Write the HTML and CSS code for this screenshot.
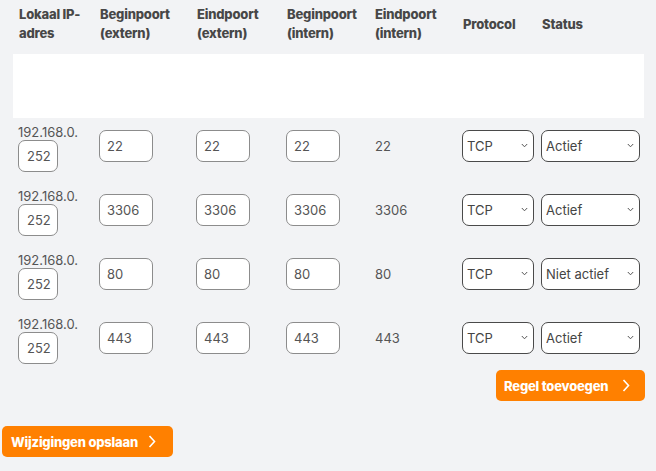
FILE: index.html
```html
<!DOCTYPE html>
<html lang="nl">
<head>
  <meta charset="UTF-8" />
  <title>Port forwarding</title>
  <link rel="stylesheet" href="styles.css">
</head>
<body>

  <div class="regels">
    <table class="tabel">
      <colgroup>
        <col style="width: 81px">
        <col style="width: 97px">
        <col style="width: 90px">
        <col style="width: 88px">
        <col style="width: 88px">
        <col style="width: 79px">
        <col style="width: 108px">
      </colgroup>
      <thead>
        <tr>
          <th>Lokaal IP-adres</th>
          <th>Beginpoort (extern)</th>
          <th>Eindpoort (extern)</th>
          <th>Beginpoort (intern)</th>
          <th>Eindpoort (intern)</th>
          <th>Protocol</th>
          <th>Status</th>
        </tr>
      </thead>
      <tbody>
        <tr class="leeg"><td colspan="7"></td></tr>

        <tr>
          <td class="ip">192.168.0.<br><input class="kort" type="text" value="252"></td>
          <td><input type="text" value="22"></td>
          <td><input type="text" value="22"></td>
          <td><input type="text" value="22"></td>
          <td class="waarde">22</td>
          <td><span class="keuze"><select class="protocol"><option>TCP</option><option>UDP</option></select><svg class="pijl" width="7" height="5" viewBox="0 0 7 5"><polyline points="0.8,1 3.5,3.8 6.2,1" fill="none" stroke="#555" stroke-width="1"/></svg></span></td>
          <td><span class="keuze"><select class="status"><option>Actief</option><option>Niet actief</option></select><svg class="pijl" width="7" height="5" viewBox="0 0 7 5"><polyline points="0.8,1 3.5,3.8 6.2,1" fill="none" stroke="#555" stroke-width="1"/></svg></span></td>
        </tr>

        <tr>
          <td class="ip">192.168.0.<br><input class="kort" type="text" value="252"></td>
          <td><input type="text" value="3306"></td>
          <td><input type="text" value="3306"></td>
          <td><input type="text" value="3306"></td>
          <td class="waarde">3306</td>
          <td><span class="keuze"><select class="protocol"><option>TCP</option><option>UDP</option></select><svg class="pijl" width="7" height="5" viewBox="0 0 7 5"><polyline points="0.8,1 3.5,3.8 6.2,1" fill="none" stroke="#555" stroke-width="1"/></svg></span></td>
          <td><span class="keuze"><select class="status"><option>Actief</option><option>Niet actief</option></select><svg class="pijl" width="7" height="5" viewBox="0 0 7 5"><polyline points="0.8,1 3.5,3.8 6.2,1" fill="none" stroke="#555" stroke-width="1"/></svg></span></td>
        </tr>

        <tr>
          <td class="ip">192.168.0.<br><input class="kort" type="text" value="252"></td>
          <td><input type="text" value="80"></td>
          <td><input type="text" value="80"></td>
          <td><input type="text" value="80"></td>
          <td class="waarde">80</td>
          <td><span class="keuze"><select class="protocol"><option>TCP</option><option>UDP</option></select><svg class="pijl" width="7" height="5" viewBox="0 0 7 5"><polyline points="0.8,1 3.5,3.8 6.2,1" fill="none" stroke="#555" stroke-width="1"/></svg></span></td>
          <td><span class="keuze"><select class="status"><option>Niet actief</option><option>Actief</option></select><svg class="pijl" width="7" height="5" viewBox="0 0 7 5"><polyline points="0.8,1 3.5,3.8 6.2,1" fill="none" stroke="#555" stroke-width="1"/></svg></span></td>
        </tr>

        <tr>
          <td class="ip">192.168.0.<br><input class="kort" type="text" value="252"></td>
          <td><input type="text" value="443"></td>
          <td><input type="text" value="443"></td>
          <td><input type="text" value="443"></td>
          <td class="waarde">443</td>
          <td><span class="keuze"><select class="protocol"><option>TCP</option><option>UDP</option></select><svg class="pijl" width="7" height="5" viewBox="0 0 7 5"><polyline points="0.8,1 3.5,3.8 6.2,1" fill="none" stroke="#555" stroke-width="1"/></svg></span></td>
          <td><span class="keuze"><select class="status"><option>Actief</option><option>Niet actief</option></select><svg class="pijl" width="7" height="5" viewBox="0 0 7 5"><polyline points="0.8,1 3.5,3.8 6.2,1" fill="none" stroke="#555" stroke-width="1"/></svg></span></td>
        </tr>
      </tbody>
    </table>

    <div class="acties">
      <button class="knop knop-regel" type="button">
        Regel toevoegen
        <svg width="8" height="13" viewBox="0 0 8 13"><polyline points="1.5,1 6.5,6.5 1.5,12" fill="none" stroke="#fff" stroke-width="1.6"/></svg>
      </button>
    </div>
  </div>

  <button class="knop knop-opslaan" type="button">
    Wijzigingen opslaan
    <svg width="8" height="13" viewBox="0 0 8 13"><polyline points="1.5,1 6.5,6.5 1.5,12" fill="none" stroke="#fff" stroke-width="1.6"/></svg>
  </button>

</body>
</html>
```

FILE: styles.css
```css
body {
  margin: 0;
  padding: 0 2px;
  background-color: #f2f3f5;
  font-family: Inter, "Noto Sans", sans-serif;
  color: #555;
  font-size: 13px;
}

.regels {
  margin: 0 9px 0 11px;
}

.tabel {
  width: 631px;
  border-collapse: collapse;
  table-layout: fixed;
}

.tabel th {
  text-align: left;
  vertical-align: middle;
  padding: 5px 6px 11px;
  line-height: 19px;
  font-weight: 800;
  color: #474747;
  letter-spacing: -0.2px;
}

.tabel .leeg td {
  height: 64px;
  padding: 0;
  background: white;
}

.tabel td {
  vertical-align: top;
  padding: 12px 5px 0;
  height: 52px;
}

.tabel td.ip {
  padding-top: 6px;
  height: 58px;
  line-height: 16px;
}

.tabel td.waarde {
  line-height: 32px;
  padding-left: 6px;
}

input[type="text"] {
  box-sizing: border-box;
  width: 54px;
  height: 32px;
  padding: 0 7px;
  border: 1px solid #8c8c8c;
  border-radius: 7px;
  background: white;
  font-family: inherit;
  font-size: 13px;
  color: #555;
}

input.kort {
  width: 40px;
  padding: 0 0 0 8px;
}

.keuze {
  position: relative;
  display: inline-block;
}

select {
  box-sizing: border-box;
  appearance: none;
  height: 32px;
  border: 1px solid #4a4a4a;
  border-radius: 7px;
  background: white;
  font-family: inherit;
  font-size: 13px;
  color: #444;
  padding: 0 4px;
}

.pijl {
  position: absolute;
  right: 6px;
  top: 13px;
  pointer-events: none;
}

select.protocol {
  width: 72px;
}

select.status {
  width: 99px;
}

.acties {
  display: flex;
  justify-content: flex-end;
  margin-top: -4px;
}

.knop {
  display: inline-flex;
  align-items: center;
  justify-content: space-between;
  height: 31px;
  border: none;
  border-radius: 5px;
  background-color: #ff8000;
  color: white;
  font-family: inherit;
  font-size: 13px;
  font-weight: 800;
  letter-spacing: -0.2px;
  cursor: pointer;
}

.knop-regel {
  width: 149px;
  padding: 0 15px 0 8px;
}

.knop-opslaan {
  width: 171px;
  margin-top: 25px;
  padding: 0 17px 0 9px;
}
```
